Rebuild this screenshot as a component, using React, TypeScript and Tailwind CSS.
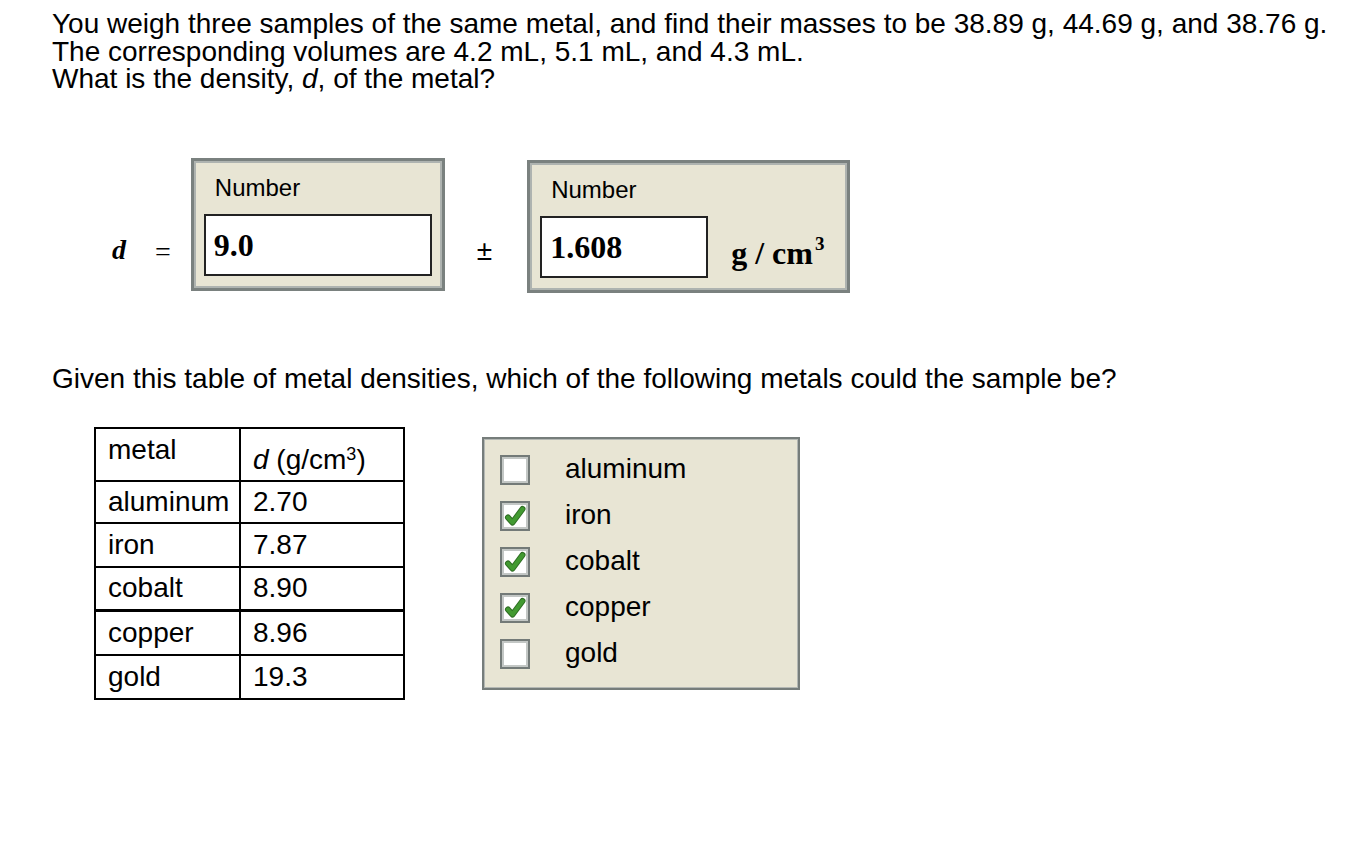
import React from 'react';

const metals = [
    { name: 'aluminum', d: '2.70' },
    { name: 'iron', d: '7.87' },
    { name: 'cobalt', d: '8.90' },
    { name: 'copper', d: '8.96' },
    { name: 'gold', d: '19.3' },
];

const choices = [
    { name: 'aluminum', checked: false },
    { name: 'iron', checked: true },
    { name: 'cobalt', checked: true },
    { name: 'copper', checked: true },
    { name: 'gold', checked: false },
];

function NumberBox({ value, width, children }: { value: string; width: string; children?: React.ReactNode }) {
    return (
        <div className="border-[3px] border-[#7a817f]">
            <div className="border-2 border-[#aeb3b0] bg-[#e8e5d4] px-[8px] pt-[11px] pb-[10px]">
                <div className="text-[24px] leading-[28px] text-black ml-[11px]">Number</div>
                <div className="flex items-center mt-[12px]">
                    <div className={`${width} h-[62px] border-2 border-[#222] bg-white flex items-center pl-[8px]`}>
                        <span className="font-['Liberation_Serif',serif] font-bold text-[32px] leading-none">{value}</span>
                    </div>
                    {children}
                </div>
            </div>
        </div>
    );
}

function CheckBox({ checked }: { checked: boolean }) {
    return (
        <div className="w-[30px] h-[30px] border-2 border-[#737a78] bg-white">
            <div className="w-full h-full border-2 border-[#c3c7c5] flex items-center justify-center">
                {checked && (
                    <svg width="22" height="22" viewBox="0 0 22 22">
                        <path d="M4 12.5 L8.5 17.5 L18.5 4" fill="none" stroke="#2f6e24" strokeWidth="6" strokeLinecap="round" strokeLinejoin="round" />
                        <path d="M4 12.5 L8.5 17.5 L18.5 4" fill="none" stroke="#429a31" strokeWidth="4" strokeLinecap="round" strokeLinejoin="round" />
                    </svg>
                )}
            </div>
        </div>
    );
}

export default function App() {
    return (
        <div className="w-[1358px] h-[868px] bg-white text-black font-['Liberation_Sans',Arial,sans-serif] overflow-hidden">
            {/* Question */}
            <div className="pl-[52px] pt-[10px] text-[28px] leading-[27.5px]">
                <p>You weigh three samples of the same metal, and find their masses to be 38.89 g, 44.69 g, and 38.76 g.</p>
                <p>The corresponding volumes are 4.2 mL, 5.1 mL, and 4.3 mL.</p>
                <p>What is the density, <i>d</i>, of the metal?</p>
            </div>

            {/* Answer row */}
            <div className="flex items-start mt-[65px] pl-[112px]">
                <span className="font-['Liberation_Serif',serif] font-bold italic text-[28px] leading-none mt-[78px]">d</span>
                <span className="font-['Liberation_Serif',serif] text-[28px] leading-none mt-[80px] ml-[29px]">=</span>
                <div className="ml-[20px]">
                    <NumberBox value="9.0" width="w-[228px]" />
                </div>
                <span className="text-[28px] leading-none mt-[79px] ml-[32px]">±</span>
                <div className="ml-[35px] mt-[2px]">
                    <NumberBox value="1.608" width="w-[168px]">
                        <span className="font-['Liberation_Serif',serif] font-bold text-[32px] leading-none ml-[23px] mr-[13px] mt-[12px] whitespace-nowrap">
                            g / cm<sup className="text-[19px] relative -top-[14px] ml-[2px]">3</sup>
                        </span>
                    </NumberBox>
                </div>
            </div>

            <p className="pl-[52px] mt-[72px] text-[28px] leading-[28px]">
                Given this table of metal densities, which of the following metals could the sample be?
            </p>

            <div className="flex items-start pl-[94px] mt-[34px]">
                {/* Density table */}
                <table className="border-collapse text-[28px] leading-[30px]">
                    <tbody>
                        <tr className="h-[53px]">
                            <td className="w-[145px] border-2 border-black align-top pl-[12px] pt-[6px]">metal</td>
                            <td className="w-[164px] border-2 border-black align-top pl-[12px] pt-[16px]">
                                <i>d</i> (g/cm<sup className="text-[18px]">3</sup>)
                            </td>
                        </tr>
                        {metals.map((m, i) => (
                            <tr key={m.name} className={i === 0 ? 'h-[42px]' : 'h-[44px]'}>
                                <td className={`border-2 border-black pl-[12px] ${i === 2 ? 'border-b-[3px]' : ''}`}>{m.name}</td>
                                <td className={`border-2 border-black pl-[12px] ${i === 2 ? 'border-b-[3px]' : ''}`}>{m.d}</td>
                            </tr>
                        ))}
                    </tbody>
                </table>

                {/* Choices */}
                <div className="ml-[77px] mt-[10px] w-[318px] border-2 border-[#767d7b] bg-[#e8e5d4]">
                    <div className="border border-[#b4b8b4] pl-[15px] pt-[15px] pb-[18px] flex flex-col gap-[16px]">
                        {choices.map((c) => (
                            <div key={c.name} className="flex items-center h-[30px]">
                                <CheckBox checked={c.checked} />
                                <span className="ml-[35px] text-[28px] leading-none -mt-[2px]">{c.name}</span>
                            </div>
                        ))}
                    </div>
                </div>
            </div>
        </div>
    );
}
